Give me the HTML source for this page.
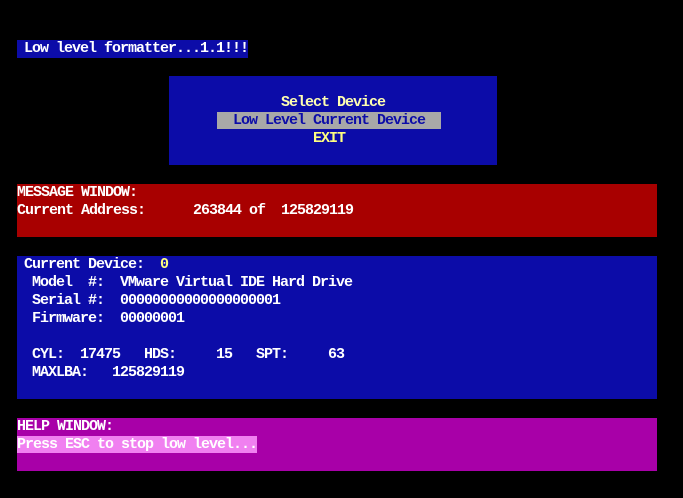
<!DOCTYPE html>
<html><head><meta charset="utf-8"><style>
body{margin:0;width:683px;height:498px;background:#000;overflow:hidden;position:relative;font-family:"Liberation Mono",monospace;font-weight:bold;font-size:15px;letter-spacing:-1px;color:#fff}
.b{position:absolute}
.t{position:absolute;white-space:pre;line-height:18px;height:18px}
</style></head><body>
<div class="b" style="left:17px;top:40px;width:231px;height:18px;background:#0c0ca8"></div>
<div class="t" style="left:24px;top:40px">Low level formatter...1.1!!!</div>

<div class="b" style="left:169px;top:76px;width:328px;height:89px;background:#0c0ca8"></div>
<div class="b" style="left:217px;top:112px;width:224px;height:17px;background:#a8a8a8"></div>
<div class="t" style="left:281px;top:94px;color:#ffffb0">Select Device</div>
<div class="t" style="left:233px;top:112px;color:#0c0ca8">Low Level Current Device</div>
<div class="t" style="left:313px;top:130px;color:#ffff80">EXIT</div>

<div class="b" style="left:17px;top:184px;width:640px;height:53px;background:#a80000"></div>
<div class="t" style="left:17px;top:184px">MESSAGE WINDOW:</div>
<div class="t" style="left:17px;top:202px">Current Address:      263844 of  125829119</div>

<div class="b" style="left:17px;top:256px;width:640px;height:143px;background:#0c0ca8"></div>
<div class="t" style="left:24px;top:256px">Current Device:  <span style="color:#ffff80">0</span></div>
<div class="t" style="left:32px;top:274px">Model  #:  VMware Virtual IDE Hard Drive</div>
<div class="t" style="left:32px;top:292px">Serial #:  00000000000000000001</div>
<div class="t" style="left:32px;top:310px">Firmware:  00000001</div>
<div class="t" style="left:32px;top:346px">CYL:  17475   HDS:     15   SPT:     63</div>
<div class="t" style="left:32px;top:364px">MAXLBA:   125829119</div>

<div class="b" style="left:17px;top:418px;width:640px;height:53px;background:#a800a8"></div>
<div class="b" style="left:17px;top:436px;width:240px;height:17px;background:#f080f0"></div>
<div class="t" style="left:17px;top:418px">HELP WINDOW:</div>
<div class="t" style="left:17px;top:436px">Press ESC to stop low level...</div>
</body></html>
